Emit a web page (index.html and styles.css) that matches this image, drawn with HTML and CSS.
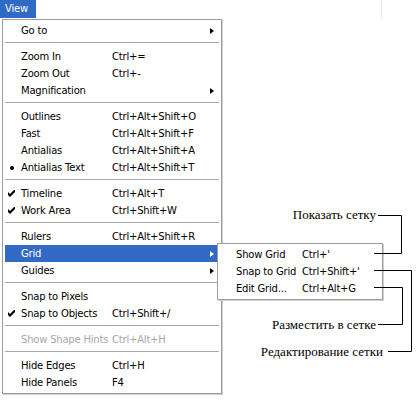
FILE: index.html
```html
<!DOCTYPE html>
<html lang="ru">
<head>
    <meta charset="UTF-8">
    <title>View menu</title>
    <link rel="stylesheet" href="styles.css">
</head>
<body>

<div class="menubar">
    <div class="menubar-item active">View</div>
</div>

<!-- Main drop-down -->
<div class="menu">
    <div class="item"><span class="mark"></span><span class="label">Go to</span><span class="key"></span><span class="arrow"></span></div>
    <div class="sep"></div>
    <div class="item"><span class="mark"></span><span class="label">Zoom In</span><span class="key">Ctrl+=</span></div>
    <div class="item"><span class="mark"></span><span class="label">Zoom Out</span><span class="key">Ctrl+-</span></div>
    <div class="item"><span class="mark"></span><span class="label">Magnification</span><span class="key"></span><span class="arrow"></span></div>
    <div class="sep"></div>
    <div class="item"><span class="mark"></span><span class="label">Outlines</span><span class="key">Ctrl+Alt+Shift+O</span></div>
    <div class="item"><span class="mark"></span><span class="label">Fast</span><span class="key">Ctrl+Alt+Shift+F</span></div>
    <div class="item"><span class="mark"></span><span class="label">Antialias</span><span class="key">Ctrl+Alt+Shift+A</span></div>
    <div class="item"><span class="mark"><span class="bullet"></span></span><span class="label">Antialias Text</span><span class="key">Ctrl+Alt+Shift+T</span></div>
    <div class="sep"></div>
    <div class="item"><span class="mark"><svg class="check" width="7" height="7" viewBox="0 0 7 7"><path d="M0 2 L2 4 L6 0 L7 0 L7 2 L2 7 L0 5 Z"/></svg></span><span class="label">Timeline</span><span class="key">Ctrl+Alt+T</span></div>
    <div class="item"><span class="mark"><svg class="check" width="7" height="7" viewBox="0 0 7 7"><path d="M0 2 L2 4 L6 0 L7 0 L7 2 L2 7 L0 5 Z"/></svg></span><span class="label">Work Area</span><span class="key">Ctrl+Shift+W</span></div>
    <div class="sep"></div>
    <div class="item"><span class="mark"></span><span class="label">Rulers</span><span class="key">Ctrl+Alt+Shift+R</span></div>
    <div class="item selected">
        <span class="mark"></span><span class="label">Grid</span><span class="key"></span><span class="arrow"></span>

        <!-- Grid submenu -->
        <div class="submenu">
            <div class="item"><span class="mark"></span><span class="label">Show Grid</span><span class="key">Ctrl+'</span></div>
            <div class="item"><span class="mark"></span><span class="label">Snap to Grid</span><span class="key">Ctrl+Shift+'</span></div>
            <div class="item"><span class="mark"></span><span class="label">Edit Grid...</span><span class="key">Ctrl+Alt+G</span></div>
        </div>
    </div>
    <div class="item"><span class="mark"></span><span class="label">Guides</span><span class="key"></span><span class="arrow"></span></div>
    <div class="sep"></div>
    <div class="item"><span class="mark"></span><span class="label">Snap to Pixels</span><span class="key"></span></div>
    <div class="item"><span class="mark"><svg class="check" width="7" height="7" viewBox="0 0 7 7"><path d="M0 2 L2 4 L6 0 L7 0 L7 2 L2 7 L0 5 Z"/></svg></span><span class="label">Snap to Objects</span><span class="key">Ctrl+Shift+/</span></div>
    <div class="sep"></div>
    <div class="item disabled"><span class="mark"></span><span class="label">Show Shape Hints</span><span class="key">Ctrl+Alt+H</span></div>
    <div class="sep"></div>
    <div class="item"><span class="mark"></span><span class="label">Hide Edges</span><span class="key">Ctrl+H</span></div>
    <div class="item"><span class="mark"></span><span class="label">Hide Panels</span><span class="key">F4</span></div>
</div>

<!-- Callout lines -->
<svg class="callouts" width="416" height="400" viewBox="0 0 416 400">
    <polyline points="378,215.5 401.5,215.5 401.5,253.5 374,253.5"/>
    <polyline points="374,270.5 411.5,270.5 411.5,351.5 388,351.5"/>
    <polyline points="374,287.5 402.5,287.5 402.5,324.5 378,324.5"/>
</svg>

<span class="callout callout-show">Показать сетку</span>
<span class="callout callout-snap">Разместить в сетке</span>
<span class="callout callout-edit">Редактирование сетки</span>

</body>
</html>
```

FILE: styles.css
```css
body {
    margin: 0;
    width: 416px;
    height: 400px;
    position: relative;
    background-color: #fff;
    font-family: "DejaVu Sans", sans-serif;
    font-size: 10px;
    letter-spacing: -0.2px;
    color: #000;
    overflow: hidden;
}

.menubar {
    display: flex;
    width: 382px;
    height: 19px;
    border-right: 1px solid #e6e6e6;
    box-sizing: border-box;
}

.menubar-item {
    width: 36px;
    height: 18px;
    line-height: 18px;
    padding-left: 5px;
    box-sizing: border-box;
}

.menubar-item.active {
    background-color: #316ac5;
    color: #fff;
}

.menu {
    margin-left: 2px;
    width: 220px;
    padding: 2px;
    box-sizing: border-box;
    border: 1px solid #9c9c9c;
    box-shadow: 1px 1px 0 #cfcfcf;
    background-color: #fff;
}

.item {
    position: relative;
    display: grid;
    grid-template-columns: 16px 91px 1fr 4px;
    align-items: center;
    height: 17px;
    padding-right: 5px;
    white-space: nowrap;
}

.item.selected {
    background-color: #316ac5;
    color: #fff;
}

.item.disabled {
    color: #a8a8a8;
}

.mark {
    display: flex;
    align-items: center;
    padding-left: 3px;
}

.check {
    fill: #000;
}

.bullet {
    display: block;
    width: 4px;
    height: 4px;
    margin-left: 2px;
    border-radius: 50%;
    background-color: #000;
}

.arrow {
    width: 0;
    height: 0;
    border-style: solid;
    border-width: 3.5px 0 3.5px 4px;
    border-color: transparent transparent transparent #000;
}

.item.selected > .arrow {
    border-left-color: #fff;
}

.sep {
    height: 9px;
    padding-top: 3px;
    box-sizing: border-box;
}

.sep::before {
    content: "";
    display: block;
    border-top: 1px solid #a8a8a8;
}

/* Grid submenu */
.submenu {
    position: absolute;
    left: 212px;
    top: -2px;
    width: 166px;
    padding: 2px;
    box-sizing: border-box;
    border: 1px solid #9c9c9c;
    box-shadow: 1px 1px 0 #cfcfcf;
    background-color: #fff;
    color: #000;
}

.submenu .item {
    grid-template-columns: 16px 66px 1fr;
    padding-right: 2px;
}

.callouts {
    position: absolute;
    left: 0;
    top: 0;
    pointer-events: none;
}

.callouts polyline {
    fill: none;
    stroke: #000;
    stroke-width: 1;
}

.callout {
    position: absolute;
    font-family: "Liberation Serif", serif;
    font-size: 13px;
    line-height: 15px;
    letter-spacing: 0;
    white-space: nowrap;
}

.callout-show {
    right: 40px;
    top: 207px;
}

.callout-snap {
    right: 40px;
    top: 317px;
}

.callout-edit {
    right: 33px;
    top: 344px;
}
```
